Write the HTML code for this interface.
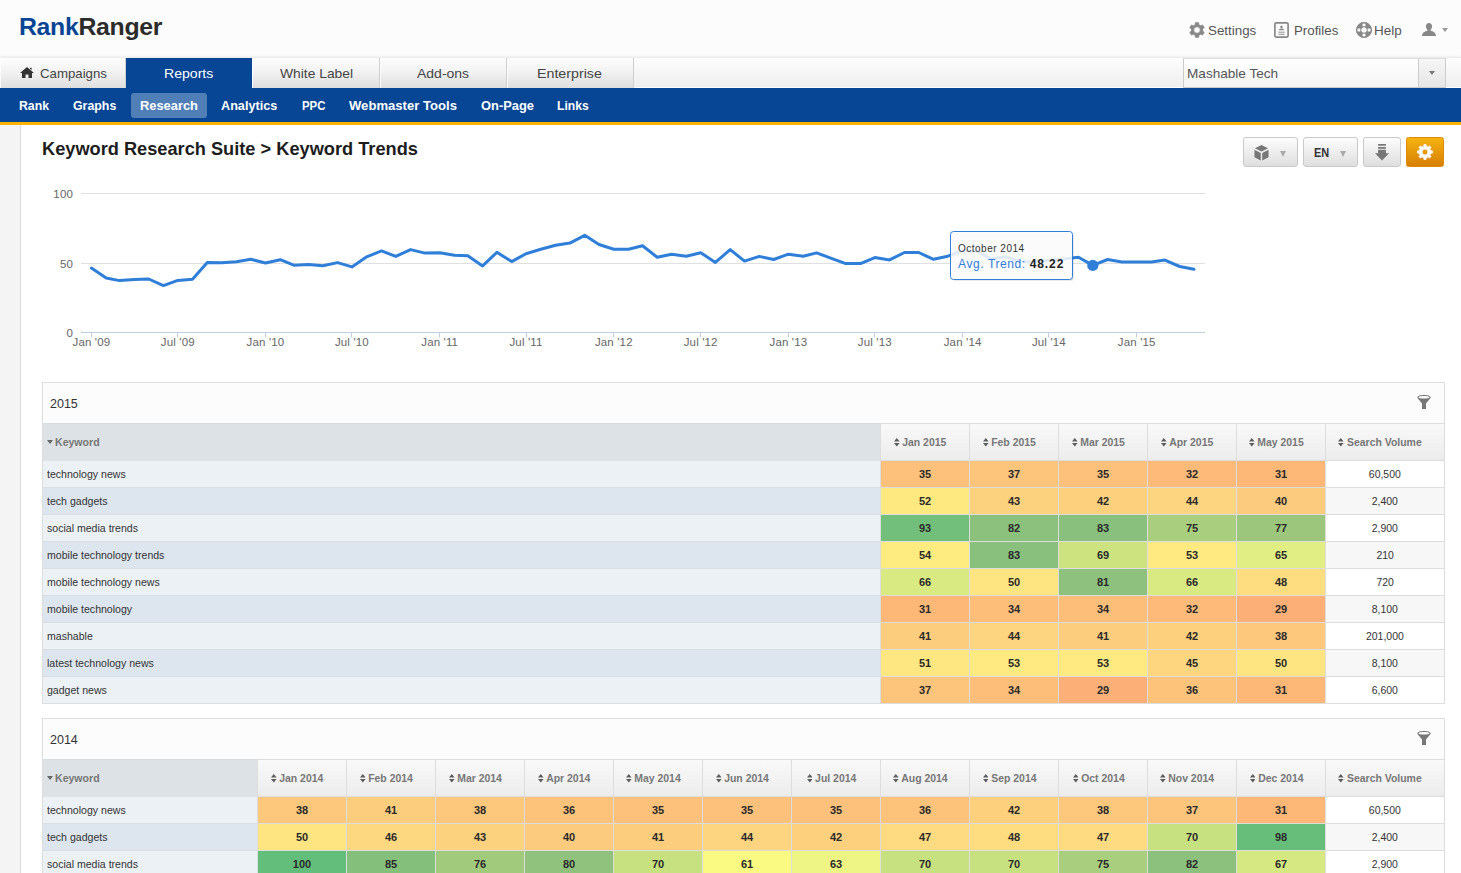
<!DOCTYPE html>
<html>
<head>
<meta charset="utf-8">
<title>Rank Ranger - Keyword Trends</title>
<style>
*{box-sizing:border-box;}
html,body{margin:0;padding:0;}
body{width:1461px;height:873px;overflow:hidden;background:#fff;font-family:"Liberation Sans",sans-serif;color:#333;position:relative;}
.abs{position:absolute;}
#hdr{left:0;top:0;width:1461px;height:58px;background:#fcfcfc;}
.fx{white-space:nowrap;transform-origin:0 50%;}
.lg{font-size:24px;line-height:30px;font-weight:bold;letter-spacing:-0.3px;}
.lg .a{color:#0a4595;}
.lg .b{color:#2b2b2b;}
.tl{font-size:13.5px;line-height:16px;color:#555;}
.nt{font-size:13.5px;line-height:30px;color:#444;}
.nt.w{color:#fff;}
.st{font-size:13.5px;line-height:24px;font-weight:bold;color:#fff;}
.mt{font-size:13.5px;line-height:28px;color:#555;}
.ti{font-size:19px;line-height:24px;font-weight:bold;color:#1d1d1d;}
#tabs{left:0;top:58px;width:1461px;height:30px;background:linear-gradient(#fefefe,#f6f6f6 50%,#eeeeee);border-bottom:1px solid #fdfdfd;box-shadow:0 -1px 3px rgba(0,0,0,0.10);}
.tab{top:0;height:30px;width:127px;border-right:1px solid #cfcfcf;background:linear-gradient(#fdfdfd,#f1f1f1 50%,#dedede);box-shadow:inset 1px 0 0 rgba(255,255,255,0.8);font-size:13.5px;line-height:30px;text-align:center;color:#444;white-space:nowrap;}
.tab.on{background:#074595;color:#fff;border-right:none;width:126px;box-shadow:none;}
#sub{left:0;top:88px;width:1461px;height:34px;background:#074595;}
#ystripe{left:0;top:122px;width:1461px;height:3px;background:#fcb400;}
.sn{top:5px;height:25px;}
.sn.on{background:#507fb8;border-radius:3px;}
#side{left:0;top:125px;width:21px;height:748px;background:#f4f4f4;border-right:1px solid #dcdcdc;}
#sel{left:1183px;top:0px;width:263px;height:30px;border:1px solid #ccc;border-top-color:#ddd;background:linear-gradient(#fff,#f4f4f4);}
#sel .t{left:4px;top:0;line-height:28px;font-size:14px;color:#555;}
#sel .b{right:0;top:0;width:27px;height:28px;border-left:1px solid #ccc;background:linear-gradient(#f6f6f6,#e6e6e6);}
#sel .b i{position:absolute;left:9.5px;top:12px;border:3.5px solid transparent;border-top:4px solid #777;border-bottom:none;}
.btn{top:137px;height:30px;border:1px solid #c9c9c9;border-radius:3px;background:linear-gradient(#fdfdfd,#dedede);}
.btn.or{border-radius:2.5px;border-color:#e08a00;background:linear-gradient(#f6b311,#d67f05);}
.btn .car{position:absolute;top:13px;border:3.4px solid transparent;border-top:6px solid #aaa;border-bottom:none;}
.btn .en{position:absolute;left:10px;top:0;line-height:30px;font-size:13px;font-weight:bold;color:#333;transform:scaleX(0.84);transform-origin:0 50%;}
.ax{font-size:11.5px;letter-spacing:0.15px;fill:#666;font-family:"Liberation Sans",sans-serif;}
.t1{font-size:10px;fill:#333;font-family:"Liberation Sans",sans-serif;letter-spacing:0.5px;}
.t2{font-size:12px;fill:#333;font-family:"Liberation Sans",sans-serif;letter-spacing:0.6px;}
.tbl{left:42px;width:1403px;border:1px solid #ddd;background:#fcfcfc;}
.tt{left:7px;top:10px;font-size:12.5px;line-height:22px;color:#333;}
.hk{left:0;top:40px;height:38px;background:#dce2e6;border-top:1px solid #d8dde0;}
.hk span{position:absolute;left:12px;top:11px;font-size:11px;font-weight:bold;color:#777;line-height:14px;}
.hk i{position:absolute;left:4px;top:16px;border:3px solid transparent;border-top:4px solid #666;border-bottom:none;}
.hc{top:40px;height:38px;width:89px;border-left:1px solid #ddd;border-top:1px solid #ddd;border-bottom:1px solid #ddd;background:linear-gradient(#f9f9f9,#ececec);font-size:11px;font-weight:bold;color:#777;line-height:36px;text-align:center;white-space:nowrap;padding-right:8px;}
.hc.sv{width:119px;}
.sa{display:inline-block;margin-right:1.5px;vertical-align:-1px;}
.row{left:0;height:27px;width:1401px;}
.kw{left:0;top:0;height:27px;border-bottom:1px solid #d9dfe5;font-size:11px;line-height:26px;padding-left:4px;color:#333;white-space:nowrap;background:#ecf1f5;}
.row.e .kw{background:#dde6ee;}
.c{top:0;height:27px;width:89px;border-left:1px solid #ddd;border-bottom:1px solid #ddd;font-size:11px;font-weight:bold;line-height:26px;text-align:center;color:#2a2a2a;}
.v{top:0;height:27px;width:119px;border-left:1px solid #ddd;border-bottom:1px solid #ddd;font-size:11px;line-height:26px;text-align:center;color:#333;background:#fff;}
.row.e .v{background:#f7f7f7;}
.sx{display:inline-block;transform:scaleX(0.96);transform-origin:0 50%;}
.sc{display:inline-block;transform:scaleX(0.95);transform-origin:50% 50%;}

</style>
</head>
<body>
<div id="hdr" class="abs"></div>
<!-- top links -->
<svg class="abs" style="left:1189px;top:22px" width="16" height="16" viewBox="0 0 16 16"><path fill="#888" stroke="#888" stroke-width="0.8" stroke-linejoin="round" fill-rule="evenodd" d="M6.21 2.69 L6.36 0.68 L9.64 0.68 L9.79 2.69 L11.70 3.80 L13.52 2.92 L15.16 5.76 L13.49 6.89 L13.49 9.11 L15.16 10.24 L13.52 13.08 L11.70 12.20 L9.79 13.31 L9.64 15.32 L6.36 15.32 L6.21 13.31 L4.30 12.20 L2.48 13.08 L0.84 10.24 L2.51 9.11 L2.51 6.89 L0.84 5.76 L2.48 2.92 L4.30 3.80Z M4.70 8.00 a3.3 3.3 0 1 0 6.6 0 a3.3 3.3 0 1 0 -6.6 0Z"/></svg>
<svg class="abs" style="left:1274px;top:22px" width="15" height="16" viewBox="0 0 15 16"><rect x="0.9" y="0.9" width="13.2" height="14.2" rx="1.3" fill="none" stroke="#888" stroke-width="1.7"/><ellipse cx="7.5" cy="4.9" rx="1.25" ry="1.5" fill="#888"/><path d="M4.900 8.300c0-1.300 1.100-1.500 2.600-1.500s2.600.2 2.600 1.500z" fill="#888"/><path d="M4.300 10.200h6.400M4.300 12.300h6.400" stroke="#888" stroke-width="0.9"/></svg>
<svg class="abs" style="left:1356px;top:22px" width="16" height="16" viewBox="0 0 16 16"><circle cx="8" cy="8" r="5.200" fill="none" stroke="#888" stroke-width="5.400"/><path d="M8 1.400V4.300M8 11.700V14.600M1.400 8H4.300M11.700 8H14.600" stroke="#fcfcfc" stroke-width="2.900"/><circle cx="8" cy="8" r="7.400" fill="none" stroke="#888" stroke-width="0.9"/><circle cx="8" cy="8" r="2.500" fill="#fcfcfc"/></svg>
<svg class="abs" style="left:1422px;top:23px" width="14" height="13" viewBox="0 0 14 13"><path fill="#888" d="M7 0c1.800 0 3.100 1.400 3.100 3.300 0 1.500-.7 2.900-1.500 3.500v.9c2.400.6 5.100 1.500 5.400 5.300H0c.3-3.800 3-4.700 5.400-5.300v-.9C4.600 6.200 3.900 4.800 3.900 3.300 3.900 1.400 5.200 0 7 0z"/></svg>
<div class="abs" style="left:1441.5px;top:28px;border:3px solid transparent;border-top:4px solid #999;border-bottom:none"></div>
<!-- tabs -->
<div id="tabs" class="abs">
<div class="abs tab" style="left:0;width:126px"></div>
<svg class="abs" style="left:20px;top:9px" width="14" height="11" viewBox="0 0 14 11"><path fill="#333" d="M7 0l7 6h-2v5H8.500V7.500H5.500V11H2V6H0zM10 .8h1.600V3L10 1.700z"/></svg>
<div class="abs tab on" style="left:126px"></div>
<div class="abs tab" style="left:252px;width:128px"></div>
<div class="abs tab" style="left:380px"></div>
<div class="abs tab" style="left:507px"></div>
<div id="sel" class="abs"><div class="abs b"><i></i></div></div>
</div>
<div id="sub" class="abs">
<div class="abs sn on" style="left:131px;width:76px"></div>
</div>
<div id="ystripe" class="abs"></div>
<div id="side" class="abs"></div>
<!-- buttons -->
<div class="abs btn" style="left:1243px;width:55px"><svg class="abs" style="left:10.300px;top:6.700px" width="15" height="16" viewBox="0 0 16 17"><path fill="#777" d="M8 0l7 3.500-7 3.500-7-3.500zM.5 5l6.700 3.400v8.100L.5 13.100zM15.500 5v8.100l-6.700 3.400V8.400z"/></svg><i class="car" style="left:36px"></i></div>
<div class="abs btn" style="left:1303px;width:55px"><span class="en">EN</span><i class="car" style="left:36px"></i></div>
<div class="abs btn" style="left:1363px;width:38px"><svg class="abs" style="left:11px;top:6px" width="14" height="16.500" viewBox="0 0 14 16.500"><path fill="#777" d="M3.100 0h7.800v1.800H3.100zM3.100 2.900h7.800v1.800H3.100zM3.100 5.800h7.800V9.300H14l-7 7.200L0 9.300h3.100z"/></svg></div>
<div class="abs btn or" style="left:1406px;width:38px"><svg class="abs" style="left:10px;top:6px" width="16" height="16" viewBox="0 0 16 16"><path fill="#fff" stroke="#fff" stroke-width="0.7" stroke-linejoin="round" fill-rule="evenodd" d="M6.76 2.23 L6.93 0.48 L9.07 0.48 L9.24 2.23 L11.20 3.04 L12.56 1.92 L14.08 3.44 L12.96 4.80 L13.77 6.76 L15.52 6.93 L15.52 9.07 L13.77 9.24 L12.96 11.20 L14.08 12.56 L12.56 14.08 L11.20 12.96 L9.24 13.77 L9.07 15.52 L6.93 15.52 L6.76 13.77 L4.80 12.96 L3.44 14.08 L1.92 12.56 L3.04 11.20 L2.23 9.24 L0.48 9.07 L0.48 6.93 L2.23 6.76 L3.04 4.80 L1.92 3.44 L3.44 1.92 L4.80 3.04Z M5.10 8.00 a2.9 2.9 0 1 0 5.8 0 a2.9 2.9 0 1 0 -5.8 0Z"/></svg></div>

<span class="abs fx nt" style="left:39.88px;top:59px;transform:scaleX(0.9798)">Campaigns</span>
<span class="abs fx nt w" style="left:163.74px;top:59px;transform:scaleX(1.0426)">Reports</span>
<span class="abs fx nt" style="left:279.85px;top:59px;transform:scaleX(1.0247)">White Label</span>
<span class="abs fx nt" style="left:417.36px;top:59px;transform:scaleX(1.0365)">Add-ons</span>
<span class="abs fx nt" style="left:537.27px;top:59px;transform:scaleX(1.0548)">Enterprise</span>
<span class="abs fx st" style="left:18.62px;top:94px;transform:scaleX(0.9078)">Rank</span>
<span class="abs fx st" style="left:72.92px;top:94px;transform:scaleX(0.9163)">Graphs</span>
<span class="abs fx st" style="left:139.89px;top:94px;transform:scaleX(0.9536)">Research</span>
<span class="abs fx st" style="left:220.91px;top:94px;transform:scaleX(0.9369)">Analytics</span>
<span class="abs fx st" style="left:302.07px;top:94px;transform:scaleX(0.8431)">PPC</span>
<span class="abs fx st" style="left:349.39px;top:94px;transform:scaleX(0.9700)">Webmaster Tools</span>
<span class="abs fx st" style="left:480.91px;top:94px;transform:scaleX(0.9542)">On-Page</span>
<span class="abs fx st" style="left:557.42px;top:94px;transform:scaleX(0.8985)">Links</span>
<span class="abs fx tl" style="left:1207.96px;top:23px;transform:scaleX(0.9892)">Settings</span>
<span class="abs fx tl" style="left:1294.05px;top:23px;transform:scaleX(0.9836)">Profiles</span>
<span class="abs fx tl" style="left:1374.36px;top:23px;transform:scaleX(0.9985)">Help</span>
<span class="abs fx mt" style="left:1187.24px;top:60px;transform:scaleX(1.0065)">Mashable Tech</span>
<span class="abs fx ti" style="left:42.49px;top:137px;transform:scaleX(0.9582)">Keyword Research Suite &gt; Keyword Trends</span>
<span class="abs fx lg" style="left:18.76px;top:12px;transform:scaleX(1.0344)"><span class="a">Rank</span><span class="b">Ranger</span></span>

<svg class="abs" style="left:0;top:180px" width="1240" height="190" viewBox="0 180 1240 190">
<path d="M81 193.5H1205" stroke="#e0e0e0" stroke-width="1" fill="none"/>
<path d="M81 263.5H1205" stroke="#e0e0e0" stroke-width="1" fill="none"/>
<path d="M81 332.5H1205" stroke="#c0d0e0" stroke-width="1" fill="none"/>
<path d="M91.5 333V337.500" stroke="#c0d0e0" stroke-width="1"/>
<text x="91.4" y="346" text-anchor="middle" class="ax">Jan '09</text>
<path d="M177.5 333V337.500" stroke="#c0d0e0" stroke-width="1"/>
<text x="177.8" y="346" text-anchor="middle" class="ax">Jul '09</text>
<path d="M265.5 333V337.500" stroke="#c0d0e0" stroke-width="1"/>
<text x="265.5" y="346" text-anchor="middle" class="ax">Jan '10</text>
<path d="M351.5 333V337.500" stroke="#c0d0e0" stroke-width="1"/>
<text x="351.9" y="346" text-anchor="middle" class="ax">Jul '10</text>
<path d="M439.5 333V337.500" stroke="#c0d0e0" stroke-width="1"/>
<text x="439.7" y="346" text-anchor="middle" class="ax">Jan '11</text>
<path d="M526.5 333V337.500" stroke="#c0d0e0" stroke-width="1"/>
<text x="526.0" y="346" text-anchor="middle" class="ax">Jul '11</text>
<path d="M613.5 333V337.500" stroke="#c0d0e0" stroke-width="1"/>
<text x="613.8" y="346" text-anchor="middle" class="ax">Jan '12</text>
<path d="M700.5 333V337.500" stroke="#c0d0e0" stroke-width="1"/>
<text x="700.7" y="346" text-anchor="middle" class="ax">Jul '12</text>
<path d="M788.5 333V337.500" stroke="#c0d0e0" stroke-width="1"/>
<text x="788.4" y="346" text-anchor="middle" class="ax">Jan '13</text>
<path d="M874.5 333V337.500" stroke="#c0d0e0" stroke-width="1"/>
<text x="874.8" y="346" text-anchor="middle" class="ax">Jul '13</text>
<path d="M962.5 333V337.500" stroke="#c0d0e0" stroke-width="1"/>
<text x="962.6" y="346" text-anchor="middle" class="ax">Jan '14</text>
<path d="M1048.5 333V337.500" stroke="#c0d0e0" stroke-width="1"/>
<text x="1048.9" y="346" text-anchor="middle" class="ax">Jul '14</text>
<path d="M1136.5 333V337.500" stroke="#c0d0e0" stroke-width="1"/>
<text x="1136.7" y="346" text-anchor="middle" class="ax">Jan '15</text>
<text x="73" y="197.5" text-anchor="end" class="ax">100</text>
<text x="73" y="267.5" text-anchor="end" class="ax">50</text>
<text x="73" y="336.5" text-anchor="end" class="ax">0</text>
<path d="M91.4 268.1 L106.2 278.0 L119.5 280.6 L134.3 279.4 L148.7 279.0 L163.4 285.6 L177.8 280.4 L192.5 279.2 L207.3 262.4 L221.6 262.8 L236.4 261.8 L250.8 259.3 L265.5 263.0 L280.3 259.7 L293.7 265.2 L308.5 264.6 L322.8 265.7 L337.6 262.6 L351.9 266.9 L366.7 256.8 L381.5 250.9 L395.8 256.4 L410.6 249.6 L424.9 253.1 L439.7 252.7 L454.5 255.2 L467.8 255.8 L482.6 265.9 L496.9 252.3 L511.7 261.6 L526.0 253.7 L540.8 249.2 L555.6 245.3 L569.9 243.1 L584.7 235.3 L599.0 244.5 L613.8 249.2 L628.6 249.2 L642.5 245.7 L657.2 257.2 L671.6 254.2 L686.3 256.2 L700.7 252.7 L715.4 262.4 L730.2 249.6 L744.5 261.1 L759.3 256.4 L773.7 259.5 L788.4 254.2 L803.2 256.2 L816.6 252.9 L831.4 258.3 L845.7 263.6 L860.5 263.6 L874.8 257.6 L889.6 259.9 L904.4 252.5 L918.7 252.5 L933.5 259.3 L947.8 256.2 L962.6 250.7 L977.4 251.3 L990.7 258.9 L1005.5 256.8 L1019.8 261.5 L1034.6 262.0 L1048.9 260.3 L1063.7 258.9 L1078.5 257.2 L1092.8 265.4 L1107.6 259.5 L1121.9 262.0 L1136.7 262.0 L1151.5 262.0 L1164.9 260.1 L1179.7 266.5 L1194.0 269.3" stroke="#2f7ed8" stroke-width="3" fill="none" stroke-linejoin="round" stroke-linecap="round"/>
<circle cx="1092.8" cy="265.4" r="5.6" fill="#2f7ed8"/>
<rect x="952" y="233" width="122" height="48" rx="3" fill="#000" opacity="0.05"/>
<rect x="951.5" y="232.5" width="122" height="48" rx="3" fill="#000" opacity="0.07"/>
<rect x="950.5" y="231.5" width="122" height="48" rx="3" fill="#fff" fill-opacity="0.86" stroke="#2f7ed8" stroke-width="1"/>
<text x="958" y="252" class="t1">October 2014</text>
<text x="958" y="268" class="t2"><tspan fill="#2f7ed8">Avg. Trend: </tspan><tspan font-weight="bold" fill="#222" letter-spacing="0.9">48.22</tspan></text>
</svg>
<div class="abs tbl" style="top:382px;height:322px;">
<div class="abs tt">2015</div>
<svg class="abs" style="left:1374px;top:12px" width="14" height="14" viewBox="0 0 14 14"><path d="M0.400 2.300C0.400 1 3.400 0.100 7 0.100S13.600 1 13.600 2.300C13.600 2.900 13.300 3.300 12.900 3.700L9 8.400V13.900H5V8.400L1.100 3.700C0.700 3.300 0.400 2.900 0.400 2.300Z" fill="#777"/><ellipse cx="7" cy="2.250" rx="5.500" ry="1.300" fill="#fbfbfb"/></svg>
<div class="abs hk" style="width:837px"><i></i><span class="sx">Keyword</span></div>
<div class="abs hc" style="left:837px"><svg class="sa" width="5.600" height="8.600" viewBox="0 0 6 9"><path d="M0 3.700L3 0l3 3.700zM0 5.300h6L3 9z" fill="#5c5c5c"/></svg><span class="sc">Jan 2015</span></div>
<div class="abs hc" style="left:926px"><svg class="sa" width="5.600" height="8.600" viewBox="0 0 6 9"><path d="M0 3.700L3 0l3 3.700zM0 5.300h6L3 9z" fill="#5c5c5c"/></svg><span class="sc">Feb 2015</span></div>
<div class="abs hc" style="left:1015px"><svg class="sa" width="5.600" height="8.600" viewBox="0 0 6 9"><path d="M0 3.700L3 0l3 3.700zM0 5.300h6L3 9z" fill="#5c5c5c"/></svg><span class="sc">Mar 2015</span></div>
<div class="abs hc" style="left:1104px"><svg class="sa" width="5.600" height="8.600" viewBox="0 0 6 9"><path d="M0 3.700L3 0l3 3.700zM0 5.300h6L3 9z" fill="#5c5c5c"/></svg><span class="sc">Apr 2015</span></div>
<div class="abs hc" style="left:1193px"><svg class="sa" width="5.600" height="8.600" viewBox="0 0 6 9"><path d="M0 3.700L3 0l3 3.700zM0 5.300h6L3 9z" fill="#5c5c5c"/></svg><span class="sc">May 2015</span></div>
<div class="abs hc sv" style="left:1282px"><svg class="sa" width="5.600" height="8.600" viewBox="0 0 6 9"><path d="M0 3.700L3 0l3 3.700zM0 5.300h6L3 9z" fill="#5c5c5c"/></svg><span class="sc">Search Volume</span></div>
<div class="abs row" style="top:78px">
<div class="abs kw" style="width:837px"><span class="sx">technology news</span></div>
<div class="abs c" style="left:837px;background:#fdc17b">35</div>
<div class="abs c" style="left:926px;background:#fdc57c">37</div>
<div class="abs c" style="left:1015px;background:#fdc17b">35</div>
<div class="abs c" style="left:1104px;background:#fdba78">32</div>
<div class="abs c" style="left:1193px;background:#fdb777">31</div>
<div class="abs v" style="left:1282px"><span class="sc">60,500</span></div>
</div>
<div class="abs row e" style="top:105px">
<div class="abs kw" style="width:837px"><span class="sx">tech gadgets</span></div>
<div class="abs c" style="left:837px;background:#fee880">52</div>
<div class="abs c" style="left:926px;background:#fdd27f">43</div>
<div class="abs c" style="left:1015px;background:#fdd07e">42</div>
<div class="abs c" style="left:1104px;background:#fdd47f">44</div>
<div class="abs c" style="left:1193px;background:#fdcb7d">40</div>
<div class="abs v" style="left:1282px"><span class="sc">2,400</span></div>
</div>
<div class="abs row" style="top:132px">
<div class="abs kw" style="width:837px"><span class="sx">social media trends</span></div>
<div class="abs c" style="left:837px;background:#72bf7c">93</div>
<div class="abs c" style="left:926px;background:#8bc07d">82</div>
<div class="abs c" style="left:1015px;background:#89c07d">83</div>
<div class="abs c" style="left:1104px;background:#a9ce7e">75</div>
<div class="abs c" style="left:1193px;background:#9bc67c">77</div>
<div class="abs v" style="left:1282px"><span class="sc">2,900</span></div>
</div>
<div class="abs row e" style="top:159px">
<div class="abs kw" style="width:837px"><span class="sx">mobile technology trends</span></div>
<div class="abs c" style="left:837px;background:#feec80">54</div>
<div class="abs c" style="left:926px;background:#89c07d">83</div>
<div class="abs c" style="left:1015px;background:#cce380">69</div>
<div class="abs c" style="left:1104px;background:#feea80">53</div>
<div class="abs c" style="left:1193px;background:#e1ee83">65</div>
<div class="abs v" style="left:1282px"><span class="sc">210</span></div>
</div>
<div class="abs row" style="top:186px">
<div class="abs kw" style="width:837px"><span class="sx">mobile technology news</span></div>
<div class="abs c" style="left:837px;background:#daea82">66</div>
<div class="abs c" style="left:926px;background:#fee581">50</div>
<div class="abs c" style="left:1015px;background:#8ec17d">81</div>
<div class="abs c" style="left:1104px;background:#daea82">66</div>
<div class="abs c" style="left:1193px;background:#fedc80">48</div>
<div class="abs v" style="left:1282px"><span class="sc">720</span></div>
</div>
<div class="abs row e" style="top:213px">
<div class="abs kw" style="width:837px"><span class="sx">mobile technology</span></div>
<div class="abs c" style="left:837px;background:#fdb777">31</div>
<div class="abs c" style="left:926px;background:#fdbe7a">34</div>
<div class="abs c" style="left:1015px;background:#fdbe7a">34</div>
<div class="abs c" style="left:1104px;background:#fdba78">32</div>
<div class="abs c" style="left:1193px;background:#fcb077">29</div>
<div class="abs v" style="left:1282px"><span class="sc">8,100</span></div>
</div>
<div class="abs row" style="top:240px">
<div class="abs kw" style="width:837px"><span class="sx">mashable</span></div>
<div class="abs c" style="left:837px;background:#fdcd7e">41</div>
<div class="abs c" style="left:926px;background:#fdd47f">44</div>
<div class="abs c" style="left:1015px;background:#fdcd7e">41</div>
<div class="abs c" style="left:1104px;background:#fdd07e">42</div>
<div class="abs c" style="left:1193px;background:#fdc77c">38</div>
<div class="abs v" style="left:1282px"><span class="sc">201,000</span></div>
</div>
<div class="abs row e" style="top:267px">
<div class="abs kw" style="width:837px"><span class="sx">latest technology news</span></div>
<div class="abs c" style="left:837px;background:#fee781">51</div>
<div class="abs c" style="left:926px;background:#feea80">53</div>
<div class="abs c" style="left:1015px;background:#feea80">53</div>
<div class="abs c" style="left:1104px;background:#fdd67f">45</div>
<div class="abs c" style="left:1193px;background:#fee581">50</div>
<div class="abs v" style="left:1282px"><span class="sc">8,100</span></div>
</div>
<div class="abs row" style="top:294px">
<div class="abs kw" style="width:837px"><span class="sx">gadget news</span></div>
<div class="abs c" style="left:837px;background:#fdc57c">37</div>
<div class="abs c" style="left:926px;background:#fdbe7a">34</div>
<div class="abs c" style="left:1015px;background:#fcb077">29</div>
<div class="abs c" style="left:1104px;background:#fdc37b">36</div>
<div class="abs c" style="left:1193px;background:#fdb777">31</div>
<div class="abs v" style="left:1282px"><span class="sc">6,600</span></div>
</div>
</div>
<div class="abs tbl" style="top:718px;height:187px;">
<div class="abs tt">2014</div>
<svg class="abs" style="left:1374px;top:12px" width="14" height="14" viewBox="0 0 14 14"><path d="M0.400 2.300C0.400 1 3.400 0.100 7 0.100S13.600 1 13.600 2.300C13.600 2.900 13.300 3.300 12.900 3.700L9 8.400V13.900H5V8.400L1.100 3.700C0.700 3.300 0.400 2.900 0.400 2.300Z" fill="#777"/><ellipse cx="7" cy="2.250" rx="5.500" ry="1.300" fill="#fbfbfb"/></svg>
<div class="abs hk" style="width:214px"><i></i><span class="sx">Keyword</span></div>
<div class="abs hc" style="left:214px"><svg class="sa" width="5.600" height="8.600" viewBox="0 0 6 9"><path d="M0 3.700L3 0l3 3.700zM0 5.300h6L3 9z" fill="#5c5c5c"/></svg><span class="sc">Jan 2014</span></div>
<div class="abs hc" style="left:303px"><svg class="sa" width="5.600" height="8.600" viewBox="0 0 6 9"><path d="M0 3.700L3 0l3 3.700zM0 5.300h6L3 9z" fill="#5c5c5c"/></svg><span class="sc">Feb 2014</span></div>
<div class="abs hc" style="left:392px"><svg class="sa" width="5.600" height="8.600" viewBox="0 0 6 9"><path d="M0 3.700L3 0l3 3.700zM0 5.300h6L3 9z" fill="#5c5c5c"/></svg><span class="sc">Mar 2014</span></div>
<div class="abs hc" style="left:481px"><svg class="sa" width="5.600" height="8.600" viewBox="0 0 6 9"><path d="M0 3.700L3 0l3 3.700zM0 5.300h6L3 9z" fill="#5c5c5c"/></svg><span class="sc">Apr 2014</span></div>
<div class="abs hc" style="left:570px"><svg class="sa" width="5.600" height="8.600" viewBox="0 0 6 9"><path d="M0 3.700L3 0l3 3.700zM0 5.300h6L3 9z" fill="#5c5c5c"/></svg><span class="sc">May 2014</span></div>
<div class="abs hc" style="left:659px"><svg class="sa" width="5.600" height="8.600" viewBox="0 0 6 9"><path d="M0 3.700L3 0l3 3.700zM0 5.300h6L3 9z" fill="#5c5c5c"/></svg><span class="sc">Jun 2014</span></div>
<div class="abs hc" style="left:748px"><svg class="sa" width="5.600" height="8.600" viewBox="0 0 6 9"><path d="M0 3.700L3 0l3 3.700zM0 5.300h6L3 9z" fill="#5c5c5c"/></svg><span class="sc">Jul 2014</span></div>
<div class="abs hc" style="left:837px"><svg class="sa" width="5.600" height="8.600" viewBox="0 0 6 9"><path d="M0 3.700L3 0l3 3.700zM0 5.300h6L3 9z" fill="#5c5c5c"/></svg><span class="sc">Aug 2014</span></div>
<div class="abs hc" style="left:926px"><svg class="sa" width="5.600" height="8.600" viewBox="0 0 6 9"><path d="M0 3.700L3 0l3 3.700zM0 5.300h6L3 9z" fill="#5c5c5c"/></svg><span class="sc">Sep 2014</span></div>
<div class="abs hc" style="left:1015px"><svg class="sa" width="5.600" height="8.600" viewBox="0 0 6 9"><path d="M0 3.700L3 0l3 3.700zM0 5.300h6L3 9z" fill="#5c5c5c"/></svg><span class="sc">Oct 2014</span></div>
<div class="abs hc" style="left:1104px"><svg class="sa" width="5.600" height="8.600" viewBox="0 0 6 9"><path d="M0 3.700L3 0l3 3.700zM0 5.300h6L3 9z" fill="#5c5c5c"/></svg><span class="sc">Nov 2014</span></div>
<div class="abs hc" style="left:1193px"><svg class="sa" width="5.600" height="8.600" viewBox="0 0 6 9"><path d="M0 3.700L3 0l3 3.700zM0 5.300h6L3 9z" fill="#5c5c5c"/></svg><span class="sc">Dec 2014</span></div>
<div class="abs hc sv" style="left:1282px"><svg class="sa" width="5.600" height="8.600" viewBox="0 0 6 9"><path d="M0 3.700L3 0l3 3.700zM0 5.300h6L3 9z" fill="#5c5c5c"/></svg><span class="sc">Search Volume</span></div>
<div class="abs row" style="top:78px">
<div class="abs kw" style="width:214px"><span class="sx">technology news</span></div>
<div class="abs c" style="left:214px;background:#fdc77c">38</div>
<div class="abs c" style="left:303px;background:#fdcd7e">41</div>
<div class="abs c" style="left:392px;background:#fdc77c">38</div>
<div class="abs c" style="left:481px;background:#fdc37b">36</div>
<div class="abs c" style="left:570px;background:#fdc17b">35</div>
<div class="abs c" style="left:659px;background:#fdc17b">35</div>
<div class="abs c" style="left:748px;background:#fdc17b">35</div>
<div class="abs c" style="left:837px;background:#fdc37b">36</div>
<div class="abs c" style="left:926px;background:#fdd07e">42</div>
<div class="abs c" style="left:1015px;background:#fdc77c">38</div>
<div class="abs c" style="left:1104px;background:#fdc57c">37</div>
<div class="abs c" style="left:1193px;background:#fdb777">31</div>
<div class="abs v" style="left:1282px"><span class="sc">60,500</span></div>
</div>
<div class="abs row e" style="top:105px">
<div class="abs kw" style="width:214px"><span class="sx">tech gadgets</span></div>
<div class="abs c" style="left:214px;background:#fee581">50</div>
<div class="abs c" style="left:303px;background:#fed880">46</div>
<div class="abs c" style="left:392px;background:#fdd27f">43</div>
<div class="abs c" style="left:481px;background:#fdcb7d">40</div>
<div class="abs c" style="left:570px;background:#fdcd7e">41</div>
<div class="abs c" style="left:659px;background:#fdd47f">44</div>
<div class="abs c" style="left:748px;background:#fdd07e">42</div>
<div class="abs c" style="left:837px;background:#feda80">47</div>
<div class="abs c" style="left:926px;background:#fedc80">48</div>
<div class="abs c" style="left:1015px;background:#feda80">47</div>
<div class="abs c" style="left:1104px;background:#c8e180">70</div>
<div class="abs c" style="left:1193px;background:#67be7b">98</div>
<div class="abs v" style="left:1282px"><span class="sc">2,400</span></div>
</div>
<div class="abs row" style="top:132px">
<div class="abs kw" style="width:214px"><span class="sx">social media trends</span></div>
<div class="abs c" style="left:214px;background:#63be7b">100</div>
<div class="abs c" style="left:303px;background:#85bf7c">85</div>
<div class="abs c" style="left:392px;background:#a2ca7d">76</div>
<div class="abs c" style="left:481px;background:#91c27d">80</div>
<div class="abs c" style="left:570px;background:#c8e180">70</div>
<div class="abs c" style="left:659px;background:#fafa82">61</div>
<div class="abs c" style="left:748px;background:#eef584">63</div>
<div class="abs c" style="left:837px;background:#c8e180">70</div>
<div class="abs c" style="left:926px;background:#c8e180">70</div>
<div class="abs c" style="left:1015px;background:#a9ce7e">75</div>
<div class="abs c" style="left:1104px;background:#8bc07d">82</div>
<div class="abs c" style="left:1193px;background:#d6e882">67</div>
<div class="abs v" style="left:1282px"><span class="sc">2,900</span></div>
</div>
<div class="abs row e" style="top:159px">
<div class="abs kw" style="width:214px"><span class="sx">mobile technology trends</span></div>
<div class="abs c" style="left:214px;background:#fdee80">55</div>
<div class="abs c" style="left:303px;background:#fbf882">60</div>
<div class="abs c" style="left:392px;background:#fcf481">58</div>
<div class="abs c" style="left:481px;background:#f4f883">62</div>
<div class="abs c" style="left:570px;background:#fcf281">57</div>
<div class="abs c" style="left:659px;background:#daea82">66</div>
<div class="abs c" style="left:748px;background:#c2dd80">71</div>
<div class="abs c" style="left:837px;background:#e7f183">64</div>
<div class="abs c" style="left:926px;background:#fbf681">59</div>
<div class="abs c" style="left:1015px;background:#eef584">63</div>
<div class="abs c" style="left:1104px;background:#d1e681">68</div>
<div class="abs c" style="left:1193px;background:#fee880">52</div>
<div class="abs v" style="left:1282px"><span class="sc">210</span></div>
</div>
</div>
</body>
</html>
